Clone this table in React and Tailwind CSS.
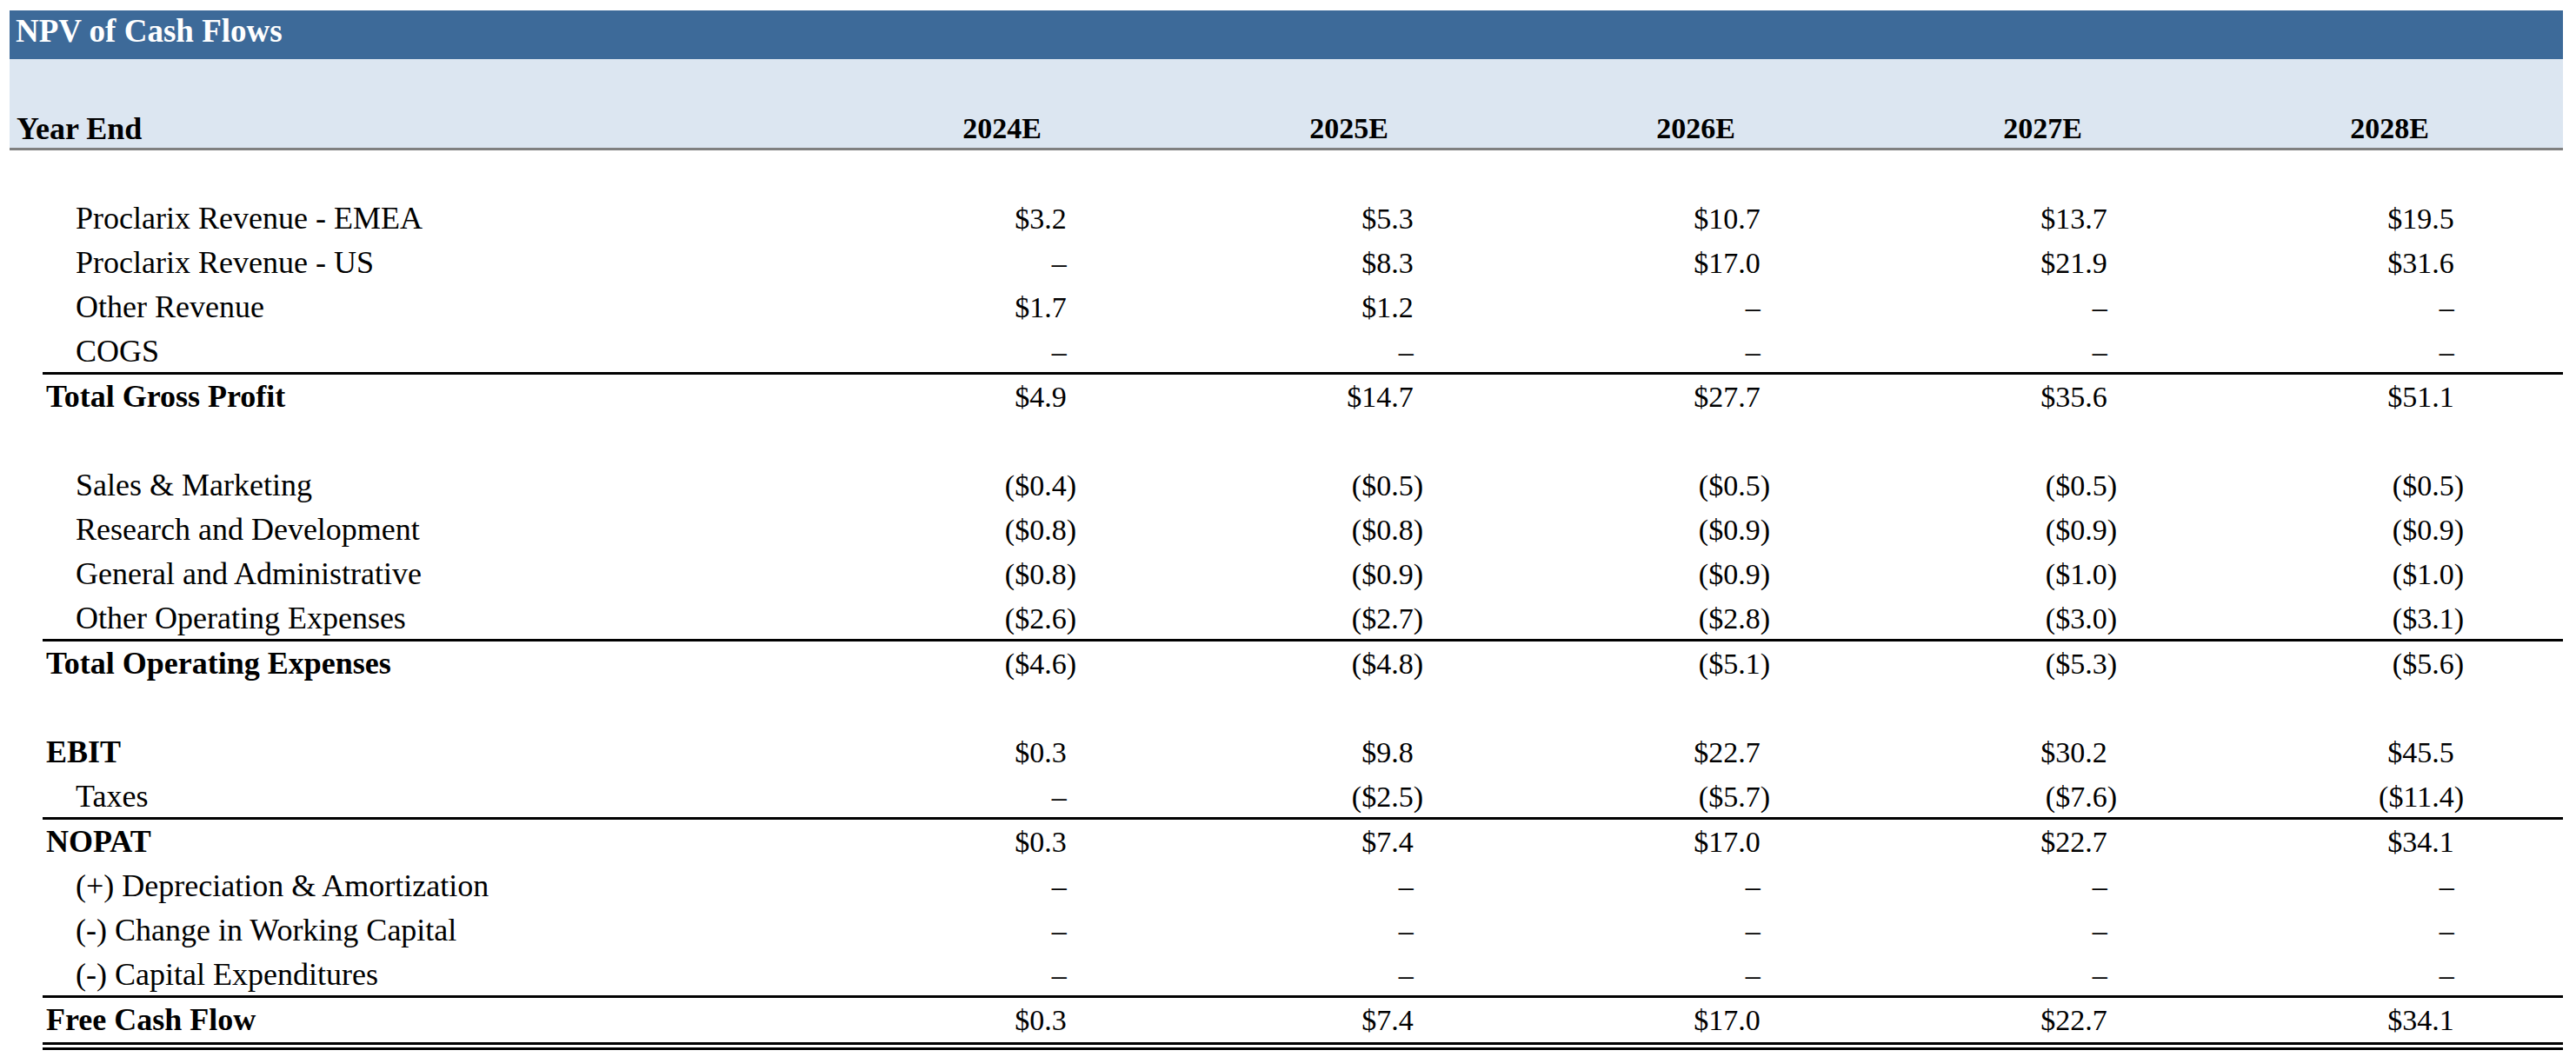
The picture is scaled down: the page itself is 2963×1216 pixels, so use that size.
import React from "react";

const D = "–";

const rows = [
  { label: "Proclarix Revenue - EMEA", values: ["$3.2", "$5.3", "$10.7", "$13.7", "$19.5"] },
  { label: "Proclarix Revenue - US", values: [D, "$8.3", "$17.0", "$21.9", "$31.6"] },
  { label: "Other Revenue", values: ["$1.7", "$1.2", D, D, D] },
  { label: "COGS", values: [D, D, D, D, D], line: true },
  { label: "Total Gross Profit", values: ["$4.9", "$14.7", "$27.7", "$35.6", "$51.1"], bold: true },
  { blank: true },
  { label: "Sales & Marketing", values: ["($0.4)", "($0.5)", "($0.5)", "($0.5)", "($0.5)"] },
  { label: "Research and Development", values: ["($0.8)", "($0.8)", "($0.9)", "($0.9)", "($0.9)"] },
  { label: "General and Administrative", values: ["($0.8)", "($0.9)", "($0.9)", "($1.0)", "($1.0)"] },
  { label: "Other Operating Expenses", values: ["($2.6)", "($2.7)", "($2.8)", "($3.0)", "($3.1)"], line: true },
  { label: "Total Operating Expenses", values: ["($4.6)", "($4.8)", "($5.1)", "($5.3)", "($5.6)"], bold: true },
  { blank: true },
  { label: "EBIT", values: ["$0.3", "$9.8", "$22.7", "$30.2", "$45.5"], bold: true },
  { label: "Taxes", values: [D, "($2.5)", "($5.7)", "($7.6)", "($11.4)"], line: true },
  { label: "NOPAT", values: ["$0.3", "$7.4", "$17.0", "$22.7", "$34.1"], bold: true },
  { label: "(+) Depreciation & Amortization", values: [D, D, D, D, D] },
  { label: "(-) Change in Working Capital", values: [D, D, D, D, D] },
  { label: "(-) Capital Expenditures", values: [D, D, D, D, D], line: true },
  { label: "Free Cash Flow", values: ["$0.3", "$7.4", "$17.0", "$22.7", "$34.1"], bold: true, double: true },
];

const years = ["2024E", "2025E", "2026E", "2027E", "2028E"];

function Value({ v }) {
  const neg = v.startsWith("(");
  return (
    <div className="text-right pr-[114px] text-[34px]">
      {v}
      {!neg && <span className="invisible">)</span>}
    </div>
  );
}

function Row({ row }) {
  if (row.blank) return <div className="h-[51px]" />;
  let cls = "h-[51px]";
  if (row.line) cls = "h-[52px] border-b-[3px] border-black";
  if (row.double) cls = "h-[60px] border-b-[9px] border-double border-black";
  return (
    <div className={`grid grid-cols-[1fr_repeat(5,399px)] items-start leading-[51px] ${cls}`}>
      <div className={row.bold ? "pl-[4px] font-bold text-[36px]" : "pl-[38px] text-[36px]"}>{row.label}</div>
      {row.values.map((v, i) => (
        <Value key={i} v={v} />
      ))}
    </div>
  );
}

export default function App() {
  return (
    <div className="min-h-screen bg-white text-black font-['Liberation_Serif',serif]">
      <div className="w-[2948px] pl-[11px] pt-[12px]">
        <div className="h-[56px] bg-[#3d6a99] pl-[7px] pt-[4px] leading-[40px] text-[37px] font-bold text-white">
          NPV of Cash Flows
        </div>
        <div className="h-[105px] bg-[#dce6f1] border-b-[3px] border-[#808080] flex items-end pb-[2px]">
          <div className="w-full grid grid-cols-[1fr_repeat(5,399px)] leading-[40px] font-bold">
            <div className="pl-[8px] text-[36px]">Year End</div>
            {years.map((y) => (
              <div key={y} className="text-center text-[34px]">{y}</div>
            ))}
          </div>
        </div>
        <div className="ml-[38px] mt-[53px]">
          {rows.map((r, i) => (
            <Row key={i} row={r} />
          ))}
        </div>
      </div>
    </div>
  );
}
